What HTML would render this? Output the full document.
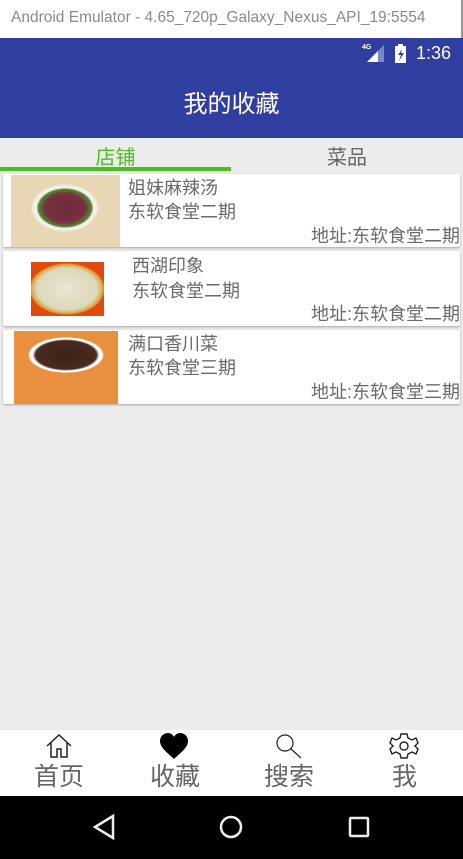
<!DOCTYPE html>
<html><head><meta charset="utf-8"><style>
*{margin:0;padding:0;box-sizing:border-box}
body{width:463px;height:859px;overflow:hidden;background:#ececec;font-family:"Liberation Sans","Noto Sans CJK SC",sans-serif;position:relative}
.abs{position:absolute}
.card{position:absolute;left:3px;width:457px;background:#fff;border-radius:2px;box-shadow:0 1px 2px rgba(0,0,0,.3)}
.t{position:absolute;font-size:18px;color:#6a6a6a;white-space:nowrap;line-height:22px}
.nav{position:absolute;top:762px;font-size:25px;color:#666;line-height:30px}
</style></head><body>
<div class="abs" style="left:0;top:0;width:463px;height:38px;background:#fff;border-right:2px solid #999"></div>
<div class="abs" style="left:11px;top:9px;font-size:15.5px;color:#8a8a8a;white-space:nowrap">Android Emulator - 4.65_720p_Galaxy_Nexus_API_19:5554</div>
<div class="abs" style="left:0;top:38px;width:463px;height:100px;background:#303f9f"></div>
<div class="abs" style="left:362px;top:44px;font-size:7px;color:#fff;font-weight:bold">4G</div>
<svg class="abs" style="left:366px;top:45px" width="20" height="18"><polygon points="18,0 18,17 1,17" fill="#7c87c4"/><polygon points="12,6 12,17 1,17" fill="#fff"/></svg>
<svg class="abs" style="left:394px;top:44px" width="14" height="20"><rect x="1" y="2" width="11" height="17" fill="#fff"/><rect x="4" y="0" width="5" height="3" fill="#fff"/><polygon points="8,5 4,11 7,11 5,17 10,9 7,9" fill="#303f9f"/></svg>
<div class="abs" style="left:416px;top:43px;font-size:18px;color:#fff;">1:36</div>
<div class="abs" style="left:0;top:90px;width:463px;text-align:center;font-size:24px;color:#fff;line-height:30px">我的收藏</div>
<div class="abs" style="left:0;top:145px;width:231px;text-align:center;font-size:20px;color:#4cbf1e;line-height:26px">店铺</div>
<div class="abs" style="left:231px;top:145px;width:232px;text-align:center;font-size:20px;color:#666;line-height:26px">菜品</div>
<div class="abs" style="left:0;top:167px;width:231px;height:4px;background:#4cbf1e"></div>

<div class="card" style="top:174px;height:73px"></div>
<div class="abs" style="left:11px;top:175px;width:109px;height:72px;background:radial-gradient(ellipse 34px 24px at 54px 33px,#6b2a3a 0,#7a3040 60%,#4a8a30 78%,#f5f0e8 84%,#f5f0e8 92%,#e8d6b4 100%)"></div>
<div class="t" style="left:128px;top:177px">姐妹麻辣汤</div>
<div class="t" style="left:128px;top:201px">东软食堂二期</div>
<div class="t" style="right:3px;top:225px">地址:东软食堂二期</div>

<div class="card" style="top:251px;height:75px"></div>
<div class="abs" style="left:31px;top:262px;width:73px;height:54px;background:radial-gradient(ellipse 38px 26px at 36px 27px,#eae6d0 0,#dcd8bc 80%,#e0a030 95%,#e04a10 100%)"></div>
<div class="t" style="left:132px;top:255px">西湖印象</div>
<div class="t" style="left:132px;top:280px">东软食堂二期</div>
<div class="t" style="right:3px;top:303px">地址:东软食堂二期</div>

<div class="card" style="top:330px;height:74px"></div>
<div class="abs" style="left:14px;top:331px;width:104px;height:73px;background:radial-gradient(ellipse 38px 18px at 52px 24px,#3a2218 0,#4a2a20 80%,#fff 88%,#fff 95%,#e89040 100%),linear-gradient(#e8f0e0,#e89040 40%,#d87830 90%,#222 97%)"></div>
<div class="t" style="left:128px;top:333px">满口香川菜</div>
<div class="t" style="left:128px;top:357px">东软食堂三期</div>
<div class="t" style="right:3px;top:381px">地址:东软食堂三期</div>

<div class="abs" style="left:0;top:730px;width:463px;height:66px;background:#fff"></div>
<svg class="abs" style="left:45px;top:733px" width="28" height="26" fill="none" stroke="#222" stroke-width="1.5"><path d="M2 13 L14 2 L26 13 M6 10 V24 H12 V16 H16 V24 H22 V10"/></svg>
<svg class="abs" style="left:159px;top:732px" width="30" height="28"><path d="M15 27 C10 22 1 16 1 9 C1 4 5 1 9 1 C12 1 14 3 15 5 C16 3 18 1 21 1 C25 1 29 4 29 9 C29 16 20 22 15 27Z" fill="#000"/></svg>
<svg class="abs" style="left:275px;top:733px" width="28" height="26" fill="none" stroke="#222" stroke-width="1.2"><circle cx="10" cy="10" r="8"/><path d="M16 16 L26 25"/></svg>
<svg class="abs" style="left:389px;top:732px" width="30" height="28" fill="none" stroke="#222" stroke-width="1.4"><path d="M12 2 H18 L19 6 L23 8 L27 6 L29 11 L26 14 L29 17 L27 22 L23 20 L19 22 L18 26 H12 L11 22 L7 20 L3 22 L1 17 L4 14 L1 11 L3 6 L7 8 L11 6Z"/><circle cx="15" cy="14" r="4"/></svg>
<div class="nav" style="left:34px">首页</div>
<div class="nav" style="left:150px">收藏</div>
<div class="nav" style="left:264px">搜索</div>
<div class="nav" style="left:392px">我</div>
<div class="abs" style="left:0;top:796px;width:463px;height:63px;background:#000"></div>
<svg class="abs" style="left:90px;top:812px" width="300" height="30" fill="none" stroke="#eee" stroke-width="2.5"><path d="M23 4 L5 15 L23 26Z"/><circle cx="141" cy="15" r="10"/><rect x="260" y="6" width="18" height="18" rx="1"/></svg>
</body></html>
